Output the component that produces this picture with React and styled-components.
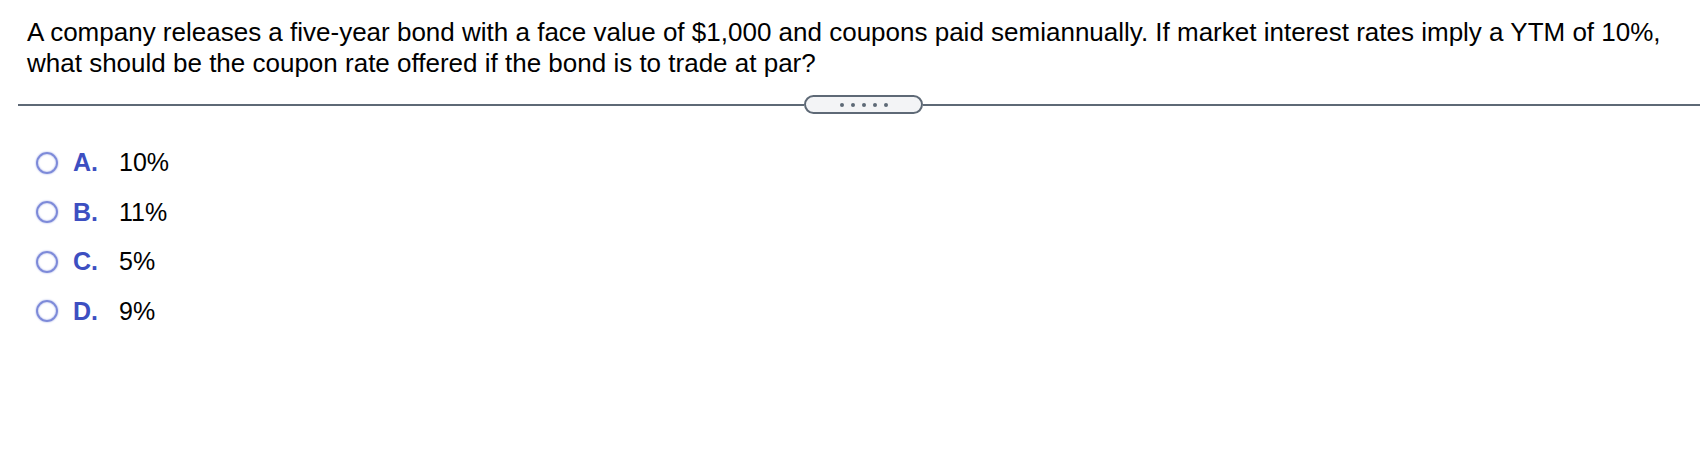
import React from 'react'
import styled, { createGlobalStyle } from 'styled-components'

const GlobalStyle = createGlobalStyle`
  html, body {
    margin: 0;
    padding: 0;
    background: #ffffff;
  }
  body {
    font-family: "Liberation Sans", Arial, sans-serif;
    color: #000000;
  }
`

const options = [
  { letter: 'A.', value: '10%' },
  { letter: 'B.', value: '11%' },
  { letter: 'C.', value: '5%' },
  { letter: 'D.', value: '9%' },
]

const App = () => {
  return (
    <>
      <GlobalStyle />
      <Page>
        <Question>
          A company releases a five-year bond with a face value of $1,000 and
          coupons paid semiannually. If market interest rates imply a YTM of
          10%, what should be the coupon rate offered if the bond is to trade
          at par?
        </Question>
        <Divider>
          <LeftRule />
          <Pill>
            <Dot />
            <Dot />
            <Dot />
            <Dot />
            <Dot />
          </Pill>
          <RightRule />
        </Divider>
        <Choices>
          {options.map((el) => (
            <Choice key={el.letter}>
              <Radio />
              <Letter>{el.letter}</Letter>
              <Value>{el.value}</Value>
            </Choice>
          ))}
        </Choices>
      </Page>
    </>
  )
}

export default App

const Page = styled.div`
  width: 1700px;
  height: 474px;
  display: flex;
  flex-direction: column;
  overflow: hidden;
`

const Question = styled.p`
  margin: 0;
  padding: 17px 10px 0 27px;
  font-size: 26px;
  line-height: 31px;
`

const Divider = styled.div`
  display: flex;
  align-items: center;
  margin-top: 16px;
  padding-left: 18px;
`

const LeftRule = styled.div`
  width: 786px;
  height: 2px;
  background: #5e6976;
`

const RightRule = styled.div`
  flex: 1;
  height: 2px;
  background: #5e6976;
`

const Pill = styled.div`
  width: 115px;
  height: 15px;
  border: 2px solid #5e6976;
  border-radius: 10px;
  background: #f3f4f6;
  display: flex;
  align-items: center;
  justify-content: center;
  gap: 7px;
`

const Dot = styled.span`
  width: 4px;
  height: 4px;
  border-radius: 50%;
  background: #5e6976;
`

const Choices = styled.div`
  display: flex;
  flex-direction: column;
  padding: 24px 0 0 36px;
`

const Choice = styled.div`
  height: 49.5px;
  display: flex;
  align-items: center;
`

const Radio = styled.span`
  width: 18px;
  height: 18px;
  border: 2px solid #7d8ad9;
  border-radius: 50%;
  box-shadow: 0 0 2px #9aa5e3, inset 0 0 2px #9aa5e3;
  margin-right: 15px;
`

const Letter = styled.span`
  width: 46px;
  font-size: 25px;
  font-weight: 700;
  color: #3d4fc1;
`

const Value = styled.span`
  font-size: 25px;
`
